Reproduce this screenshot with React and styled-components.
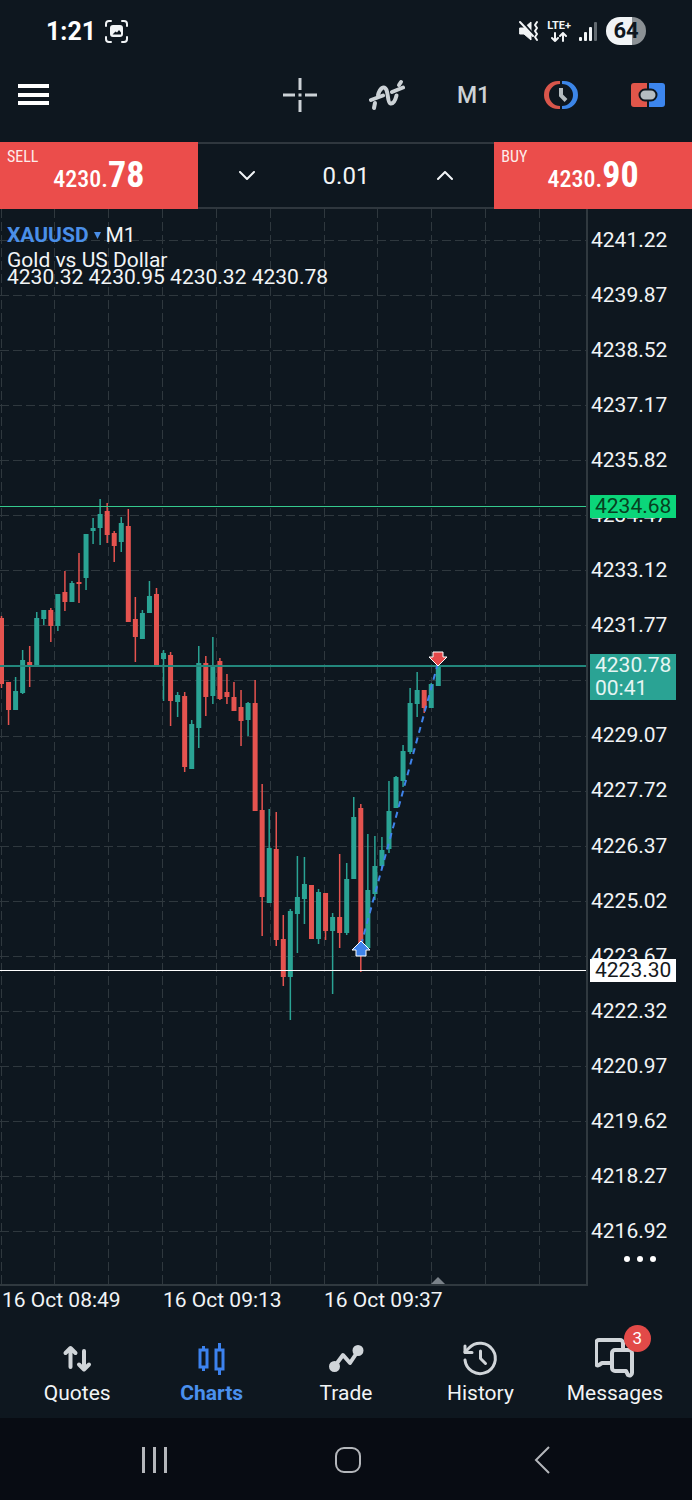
import React from 'react';
import styled, { createGlobalStyle } from 'styled-components';

const GlobalStyle = createGlobalStyle`
    * {
        box-sizing: border-box;
    }

    body {
        margin: 0;
        background: #0e171f;
        font-family: Roboto, "Liberation Sans", sans-serif;
        color: #f1f4f6;
    }

    button, input {
        margin: 0;
        padding: 0;
        border: 0;
        background: none;
        color: inherit;
        font: inherit;
    }

    button {
        cursor: pointer;
    }

    svg {
        display: block;
        flex: none;
    }
`;

const GREEN = '#2aa394';
const RED = '#e5534f';
const GRID = '#2f383e';

/* screen y of the chart's top edge, all chart values are screen y */
const CHART_TOP = 209;
const CHART_HEIGHT = 1077;
const FIRST_PRICE = 4241.22;
const FIRST_Y = 240;
const PRICE_STEP = 1.35;
const ROW = 55.06;

const priceY = (price) => FIRST_Y + ((FIRST_PRICE - price) / PRICE_STEP) * ROW;

const prices = Array.from({ length: 19 }, (_, i) => (FIRST_PRICE - i * PRICE_STEP).toFixed(2));

const times = ['16 Oct 08:49', '16 Oct 09:13', '16 Oct 09:37'];

/* wick top, body top, body bottom, wick bottom, rising */
const candles = [
    [616, 618, 684, 688, 0], [682, 682, 710, 725, 0], [677, 691, 710, 710, 1], [650, 660, 693, 694, 1],
    [646, 662, 666, 687, 0], [612, 618, 666, 666, 1], [610, 610, 619, 625, 1], [608, 610, 626, 642, 0],
    [594, 594, 626, 631, 1], [571, 592, 602, 611, 0], [581, 583, 602, 602, 1], [553, 582, 584, 603, 0],
    [534, 534, 578, 590, 1], [518, 528, 531, 544, 1], [499, 514, 528, 545, 1], [503, 511, 535, 543, 0],
    [531, 533, 546, 562, 0], [517, 523, 542, 552, 1], [509, 526, 622, 622, 0], [597, 619, 637, 662, 0],
    [610, 613, 639, 639, 1], [581, 596, 613, 613, 1], [588, 594, 665, 665, 0], [650, 653, 659, 701, 1],
    [652, 655, 701, 726, 0], [692, 695, 702, 717, 1], [692, 696, 767, 772, 0], [720, 724, 769, 769, 1],
    [646, 663, 728, 748, 1], [656, 663, 697, 716, 0], [637, 666, 696, 704, 1], [658, 661, 699, 700, 0],
    [674, 692, 697, 704, 0], [682, 697, 711, 711, 0], [690, 707, 721, 746, 0], [702, 703, 720, 736, 1],
    [680, 703, 811, 811, 0], [784, 810, 897, 936, 0], [809, 848, 903, 903, 1], [812, 849, 940, 946, 0],
    [915, 939, 977, 986, 0], [909, 911, 977, 1020, 1], [856, 897, 914, 953, 1], [857, 884, 899, 924, 1],
    [885, 885, 939, 939, 0], [889, 892, 939, 944, 1], [893, 893, 931, 940, 0], [913, 917, 931, 994, 1],
    [854, 917, 933, 948, 0], [863, 879, 933, 935, 1], [797, 817, 879, 879, 1], [804, 808, 950, 972, 0],
    [834, 890, 948, 948, 1], [836, 866, 894, 900, 1], [837, 850, 866, 868, 1], [781, 811, 849, 853, 1],
    [776, 777, 808, 808, 1], [745, 751, 781, 787, 1], [688, 703, 752, 754, 1], [672, 690, 704, 717, 1],
    [690, 690, 708, 713, 0], [683, 684, 708, 708, 1], [666, 666, 686, 686, 1],
];

const Screen = styled.div`
    display: flex;
    flex-direction: column;
    min-height: 100vh;
`;

const StatusBar = styled.header`
    display: flex;
    align-items: center;
    justify-content: space-between;
    height: 62px;
    padding: 0 46px;
`;

const StatusGroup = styled.div`
    display: flex;
    align-items: center;
    gap: ${({ $gap }) => $gap}px;
`;

const Clock = styled.span`
    font-size: 25px;
    font-weight: 700;
    color: #fff;
`;

const Network = styled.div`
    display: flex;
    flex-direction: column;
    align-items: center;
    gap: 1px;
    font-size: 11px;
    line-height: 11px;
    font-weight: 700;
`;

const Battery = styled.div`
    width: 40px;
    border-radius: 14px;
    background: linear-gradient(90deg, #f1f4f6 64%, #8b9195 64%);
    color: #0e171f;
    font-size: 22px;
    line-height: 28px;
    font-weight: 700;
    text-align: center;
`;

const Toolbar = styled.nav`
    display: flex;
    align-items: center;
    height: 80px;
    padding: 2px 1px 16px 0;
`;

const MenuButton = styled.button`
    margin-right: auto;
    padding: 10px 18px;
`;

const ToolButton = styled.button`
    display: flex;
    align-items: center;
    justify-content: center;
    width: 87px;
    height: 60px;
    color: #ccd2d6;
    font-size: 23px;
    font-weight: 500;
`;

const TradeRow = styled.section`
    display: grid;
    grid-template-columns: 2fr 3fr 2fr;
    height: 67px;
`;

const TradeButton = styled.button`
    display: flex;
    flex-direction: column;
    padding: 7px 7px 0;
    background: #eb4d4b;
    color: #fdeceb;
    text-align: left;
    font-family: "Roboto Condensed", Roboto, sans-serif;
`;

const TradeLabel = styled.span`
    font-size: 16px;
    line-height: 16px;
`;

const TradePrice = styled.span`
    align-self: center;
    color: #fff;
    font-size: 24px;
    line-height: 20px;
    font-weight: 500;

    strong {
        font-size: 36px;
        font-weight: 700;
    }
`;

const Volume = styled.div`
    display: grid;
    grid-template-columns: 1fr 1fr 1fr;
    align-items: center;
    border-top: 2px solid #2f373e;
    border-bottom: 2px solid #2f373e;

    button {
        display: flex;
        justify-content: center;
        padding: 16px 0;
    }

    input {
        width: 100%;
        font-size: 24px;
        text-align: center;
        outline: none;
    }
`;

const ChartArea = styled.main`
    position: relative;
    display: flex;
    height: ${CHART_HEIGHT}px;
`;

const Plot = styled.div`
    flex: 1;
    min-width: 0;
    border-right: 2px solid #30393f;
    border-bottom: 2px solid #30393f;
`;

const Legend = styled.div`
    position: absolute;
    top: 18px;
    left: 7px;
    font-size: 21px;
    line-height: 17px;
`;

const SymbolLine = styled.div`
    display: flex;
    align-items: center;
    gap: 5px;
    margin-bottom: 8px;
`;

const SymbolButton = styled.button`
    display: flex;
    align-items: center;
    gap: 5px;
    color: #4a8fe8;
    font-weight: 700;
`;

const PriceAxis = styled.aside`
    position: relative;
    display: flex;
    flex-direction: column;
    width: 104px;
    padding: 20px 0 17px;
`;

const PriceList = styled.ul`
    flex: 1;
    display: flex;
    flex-direction: column;
    justify-content: space-between;
    margin: 0 0 7px;
    padding: 0 0 0 3px;
    list-style: none;
    font-size: 21px;
    line-height: 22px;
`;

const PriceTag = styled.div`
    position: absolute;
    left: 2px;
    width: 86px;
    padding-left: 5px;
    background: ${({ $bg }) => $bg};
    color: ${({ $color }) => $color};
    font-size: 21px;
    line-height: 23px;
`;

const MoreButton = styled.button`
    align-self: center;
    height: 20px;
`;

const TimeAxis = styled.div`
    display: flex;
    height: 32px;
    padding: 3px 2px 0;
    font-size: 21px;
    line-height: 22px;

    span {
        width: 161px;
    }
`;

const TabBar = styled.nav`
    display: flex;
    height: 100px;
    padding: 0 10px;
`;

const Tab = styled.a`
    flex: 1;
    display: flex;
    flex-direction: column;
    align-items: center;
    padding-top: 20px;
    gap: 4px;
    color: ${({ $active }) => ($active ? '#4a90ee' : '#f1f4f6')};
    font-size: 21px;
    line-height: 22px;
    font-weight: ${({ $active }) => ($active ? 700 : 400)};
    text-decoration: none;
`;

const TabIcon = styled.span`
    position: relative;
    color: ${({ $active }) => ($active ? '#3c82ee' : '#d0d5d9')};
`;

const Badge = styled.span`
    position: absolute;
    top: -13px;
    left: 29px;
    width: 27px;
    border-radius: 50%;
    background: #e24a48;
    color: #fff;
    font-size: 17px;
    line-height: 27px;
    font-weight: 400;
    text-align: center;
`;

const SystemBar = styled.footer`
    flex: 1;
    display: flex;
    align-items: center;
    justify-content: space-between;
    min-height: 82px;
    padding: 2px 136px 0 141px;
    background: #080c13;
`;

const Stroke = ({ w, h, width = 3, children }) => (
    <svg width={w} height={h} viewBox={`0 0 ${w} ${h}`} fill="none" stroke="currentColor"
        strokeWidth={width} strokeLinecap="round" strokeLinejoin="round">
        {children}
    </svg>
);

const CaptureIcon = () => (
    <Stroke w={23} h={23} width={2}>
        <path d="M1 6V4a3 3 0 0 1 3-3h2M17 1h2a3 3 0 0 1 3 3v2M22 17v2a3 3 0 0 1-3 3h-2M6 22H4a3 3 0 0 1-3-3v-2" />
        <rect x="6" y="6" width="11" height="10" rx="2" fill="currentColor" />
        <path d="M7.500 14.500l3-3 1.500 1 2-2.500 2 2.500v2z" fill="#0e171f" stroke="none" />
    </Stroke>
);

const MuteIcon = () => (
    <svg width="20" height="22" viewBox="0 0 20 22" fill="none" stroke="#f1f4f6" strokeLinecap="round" strokeLinejoin="round">
        <path d="M1 8h4l7-6v18l-7-6H1z" fill="#f1f4f6" strokeWidth="1" />
        <path d="M2 0l12 14" stroke="#0e171f" strokeWidth="2" />
        <path d="M1 2l13 14" strokeWidth="2" />
        <path d="M18 2l-2 3 2 3-2 3 2 3-2 3 2 3" strokeWidth="2" />
    </svg>
);

const SignalIcon = () => (
    <svg width="19" height="19" viewBox="0 0 19 19" fill="#f1f4f6">
        <rect x="0" y="15" width="3" height="4" rx="1" />
        <rect x="5" y="10" width="3" height="9" rx="1" />
        <rect x="10" y="5" width="3" height="14" rx="1" />
        <rect x="15" y="0" width="3" height="19" rx="1" fill="#626a70" />
    </svg>
);

const CrosshairIcon = () => (
    <svg width="34" height="34" viewBox="0 0 34 34" stroke="currentColor" strokeWidth="3" fill="none">
        <path d="M17 0v12M17 22v12M0 17h12M22 17h12M15.500 17h3" />
    </svg>
);

const IndicatorIcon = () => (
    <Stroke w={36} h={32} width={4}>
        <path d="M5 29l1-5M9 16C11 9 15 6 17.500 11c2 5 1 13 4 13.500 3 .500 5-4 6-8M30 6l2-3" />
        <path d="M2 21l12-4.500M23 13l11-4.500" />
    </Stroke>
);

const SessionIcon = () => (
    <svg width="34" height="28" viewBox="0 0 34 28">
        <path d="M16 0H14A14 14 0 0 0 14 28H16V25A11 11 0 0 1 16 3z" fill="#d9564b" />
        <path d="M18 0H20A14 14 0 0 1 20 28H18V25A11 11 0 0 0 18 3z" fill="#3c86e8" />
        <path d="M17 7v7.500l5 5" fill="none" stroke="#b5bdc1" strokeWidth="4" />
    </svg>
);

const OneClickIcon = () => (
    <svg width="34" height="24" viewBox="0 0 34 24">
        <path d="M3 0h13v24H3a3 3 0 0 1-3-3V3a3 3 0 0 1 3-3z" fill="#e0564a" />
        <path d="M18 0h13a3 3 0 0 1 3 3v18a3 3 0 0 1-3 3H18z" fill="#3c86ee" />
        <rect x="8.500" y="6.500" width="17" height="11" rx="5.500" fill="#b5bdc1" stroke="#0e171f" strokeWidth="2" />
    </svg>
);

const QuotesIcon = () => (
    <Stroke w={40} h={40} width={4}>
        <path d="M13.500 29V10M8.500 15l5-5 5 5" />
        <path d="M27 13v18M22 26.500l5 5 5-5" />
    </Stroke>
);

const ChartsIcon = () => (
    <svg width="40" height="40" viewBox="0 0 40 40" fill="none" stroke="currentColor" strokeWidth="3">
        <rect x="8" y="12" width="7" height="17" />
        <path d="M11.500 8v4M11.500 29v4" />
        <rect x="24" y="12" width="7" height="19" />
        <path d="M27.500 5v7M27.500 31v6" />
    </svg>
);

const TradeIcon = () => (
    <Stroke w={40} h={40} width={4}>
        <path d="M8.500 28.500L17 17l7 8 8-12" />
        <circle cx="8.500" cy="28.500" r="3.500" fill="currentColor" />
        <circle cx="32" cy="12.500" r="3.500" fill="currentColor" />
    </Stroke>
);

const HistoryIcon = () => (
    <Stroke w={40} h={40} width={3}>
        <path d="M5 22a15.200 15.200 0 1 0 4-12L5 14" />
        <path d="M5 8v6.500h7" />
        <path d="M20.500 13v7.500l5 5" />
    </Stroke>
);

const MessagesIcon = () => (
    <Stroke w={40} h={40} width={4}>
        <path d="M28 10V5a3 3 0 0 0-3-3H4a3 3 0 0 0-3 3v20c0 2 1 3 3 2l3-2h8" />
        <path d="M20 12h14a3 3 0 0 1 3 3v20c0 2-2 3-4 2l-2-4H20a3 3 0 0 1-3-3V15a3 3 0 0 1 3-3z" />
    </Stroke>
);

const tabs = [
    { label: 'Quotes', Icon: QuotesIcon },
    { label: 'Charts', Icon: ChartsIcon, active: true },
    { label: 'Trade', Icon: TradeIcon },
    { label: 'History', Icon: HistoryIcon },
    { label: 'Messages', Icon: MessagesIcon, badge: 3 },
];

const PriceChart = () => (
    <svg width="100%" height={CHART_HEIGHT - 2} role="img" aria-label="XAUUSD M1 candles">
        <g transform={`translate(0 ${-CHART_TOP})`}>
            <g stroke={GRID} strokeWidth="1">
                {Array.from({ length: 11 }, (_, i) => {
                    const x = Math.floor(1 + i * 53.85) + 0.5;
                    return <line key={i} x1={x} x2={x} y1="209" y2="1285" strokeDasharray="9 4" />;
                })}
                {prices.map((price) => {
                    const y = Math.round(priceY(Number(price))) + 0.5;
                    return <line key={price} x1="0" x2="100%" y1={y} y2={y} strokeDasharray="9 4" />;
                })}
            </g>
            {candles.map(([high, top, bottom, low, up], i) => {
                const x = 1.5 + i * 7.045;
                return (
                    <g key={i} fill={up ? GREEN : RED}>
                        <rect x={x - 0.75} y={high} width="1.500" height={low - high} />
                        <rect x={x - 2.5} y={top} width="5" height={bottom - top} />
                    </g>
                );
            })}
            <line x1="0" x2="100%" y1="506.500" y2="506.500" stroke="#35c98d" />
            <line x1="0" x2="100%" y1="666" y2="666" stroke="#23877c" strokeWidth="2" />
            <line x1="0" x2="100%" y1="970.500" y2="970.500" stroke="#fff" />
            <path d="M361 945L438 663" stroke="#3f83ea" strokeWidth="2" strokeDasharray="6 5" />
            <path d="M361 941l9 9h-4v6h-10v-6h-4z" fill="#3f83ea" stroke="#fff" />
            <path d="M438 666l-9-9h4v-5h10v5h4z" fill="#e5484a" stroke="#fff" />
            <path d="M438 1277l8 8h-16z" fill="#7a8289" />
        </g>
    </svg>
);

const App = () => {
    return (
        <>
            <GlobalStyle />
            <Screen>
                <StatusBar>
                    <StatusGroup $gap={9}>
                        <Clock>1:21</Clock>
                        <CaptureIcon />
                    </StatusGroup>
                    <StatusGroup $gap={8}>
                        <MuteIcon />
                        <Network>
                            LTE+
                            <Stroke w={16} h={10} width={2}>
                                <path d="M4 1v8M1 6l3 3 3-3M12 9V1M9 4l3-3 3 3" />
                            </Stroke>
                        </Network>
                        <SignalIcon />
                        <Battery>64</Battery>
                    </StatusGroup>
                </StatusBar>

                <Toolbar>
                    <MenuButton aria-label="Menu">
                        <svg width="31" height="22" viewBox="0 0 31 22" fill="#fff">
                            <rect width="31" height="4" y="0" />
                            <rect width="31" height="4" y="9" />
                            <rect width="31" height="4" y="17" />
                        </svg>
                    </MenuButton>
                    <ToolButton aria-label="Crosshair"><CrosshairIcon /></ToolButton>
                    <ToolButton aria-label="Indicators"><IndicatorIcon /></ToolButton>
                    <ToolButton>M1</ToolButton>
                    <ToolButton aria-label="Sessions"><SessionIcon /></ToolButton>
                    <ToolButton aria-label="One click trading"><OneClickIcon /></ToolButton>
                </Toolbar>

                <TradeRow>
                    <TradeButton>
                        <TradeLabel>SELL</TradeLabel>
                        <TradePrice>4230.<strong>78</strong></TradePrice>
                    </TradeButton>
                    <Volume>
                        <button aria-label="Decrease volume">
                            <Stroke w={18} h={10} width={2}><path d="M2 1l7 7 7-7" /></Stroke>
                        </button>
                        <input type="text" aria-label="Volume" defaultValue="0.01" />
                        <button aria-label="Increase volume">
                            <Stroke w={18} h={10} width={2}><path d="M2 8l7-7 7 7" /></Stroke>
                        </button>
                    </Volume>
                    <TradeButton>
                        <TradeLabel>BUY</TradeLabel>
                        <TradePrice>4230.<strong>90</strong></TradePrice>
                    </TradeButton>
                </TradeRow>

                <ChartArea>
                    <Plot>
                        <PriceChart />
                    </Plot>
                    <Legend>
                        <SymbolLine>
                            <SymbolButton>
                                XAUUSD
                                <svg width="7" height="7" viewBox="0 0 7 7" fill="currentColor"><path d="M0 0h7L3.500 7z" /></svg>
                            </SymbolButton>
                            M1
                        </SymbolLine>
                        <div>Gold vs US Dollar</div>
                        <div>4230.32 4230.95 4230.32 4230.78</div>
                    </Legend>
                    <PriceAxis>
                        <PriceList>
                            {prices.map((price) => <li key={price}>{price}</li>)}
                        </PriceList>
                        <MoreButton aria-label="More">
                            <svg width="34" height="8" viewBox="0 0 34 8" fill="#fff">
                                <circle cx="4" cy="4" r="3" />
                                <circle cx="17" cy="4" r="3" />
                                <circle cx="30" cy="4" r="3" />
                            </svg>
                        </MoreButton>
                        <PriceTag $bg="#0bd67a" $color="#07401f" style={{ top: Math.round(priceY(4234.68)) - CHART_TOP - 12 }}>
                            4234.68
                        </PriceTag>
                        <PriceTag $bg={GREEN} $color="#e6f5f3" style={{ top: Math.round(priceY(4230.78)) - CHART_TOP - 12 }}>
                            4230.78<br />00:41
                        </PriceTag>
                        <PriceTag $bg="#fff" $color="#15191c" style={{ top: Math.round(priceY(4223.3)) - CHART_TOP - 12 }}>
                            4223.30
                        </PriceTag>
                    </PriceAxis>
                </ChartArea>

                <TimeAxis>
                    {times.map((time) => <span key={time}>{time}</span>)}
                </TimeAxis>

                <TabBar>
                    {tabs.map(({ label, Icon, active, badge }) => (
                        <Tab key={label} href={`#${label.toLowerCase()}`} $active={active}>
                            <TabIcon $active={active}>
                                <Icon />
                                {badge && <Badge>{badge}</Badge>}
                            </TabIcon>
                            {label}
                        </Tab>
                    ))}
                </TabBar>

                <SystemBar>
                    <button aria-label="Recent apps">
                        <svg width="28" height="28" viewBox="0 0 28 28" stroke="#b4b7bb" strokeWidth="3">
                            <path d="M2.500 1v26M13.500 1v26M24.500 1v26" />
                        </svg>
                    </button>
                    <button aria-label="Home">
                        <svg width="28" height="28" viewBox="0 0 28 28" fill="none" stroke="#b4b7bb" strokeWidth="2">
                            <rect x="1" y="2" width="24" height="24" rx="8" />
                        </svg>
                    </button>
                    <button aria-label="Back">
                        <svg width="28" height="28" viewBox="0 0 28 28" fill="none" stroke="#b4b7bb" strokeWidth="2">
                            <path d="M21 1L8 14l13 13" />
                        </svg>
                    </button>
                </SystemBar>
            </Screen>
        </>
    );
};

export default App;
